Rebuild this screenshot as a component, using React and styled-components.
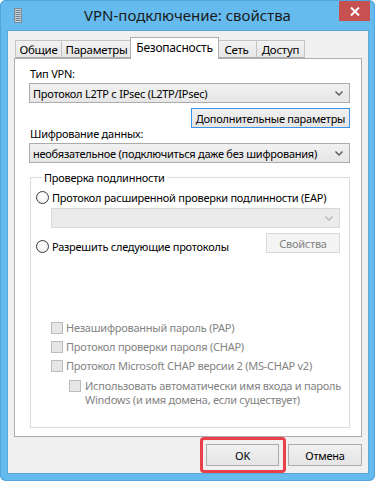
import styled, { createGlobalStyle } from "styled-components";

const Global = createGlobalStyle`
  html, body {
    margin: 0;
    background: #fff;
  }
  body {
    font-family: "Segoe UI", "Noto Sans", sans-serif;
    font-size: 11px;
    letter-spacing: -0.25px;
    color: #000;
  }
  * { box-sizing: border-box; }
`;

export default function App() {
  return (
    <>
      <Global />
      <Window>
        <TitleBar>
          <IconCell>
            <svg width="8" height="15" viewBox="0 0 8 15">
              <rect x="0.5" y="0.5" width="7" height="14" fill="#c9d3dc" stroke="#7d8a96" />
              {[2, 4, 6, 8, 10, 12].map((y) => (
                <rect key={y} x="1.5" y={y} width="5" height="1" fill="#6e7b88" />
              ))}
            </svg>
          </IconCell>
          <Title>VPN-подключение: свойства</Title>
          <CloseCell>
            <CloseButton>
              <svg width="10" height="9" viewBox="0 0 10 9">
                <path d="M1 0.5 L9 8.5 M9 0.5 L1 8.5" stroke="#fff" strokeWidth="2" />
              </svg>
            </CloseButton>
          </CloseCell>
        </TitleBar>

        <Client>
          <TabStrip>
            <Tab $w={47}>Общие</Tab>
            <Tab $w={71}>Параметры</Tab>
            <Tab $w={89} $active>Безопасность</Tab>
            <Tab $w={41}>Сеть</Tab>
            <Tab $w={49}>Доступ</Tab>
          </TabStrip>

          <Panel>
            <Label>Тип VPN:</Label>
            <Select>
              <span>Протокол L2TP с IPsec (L2TP/IPsec)</span>
              <Chevron />
            </Select>
            <RightRow>
              <Button $focused $w={159}>Дополнительные параметры</Button>
            </RightRow>
            <Label $tight>Шифрование данных:</Label>
            <Select>
              <span>необязательное (подключиться даже без шифрования)</span>
              <Chevron />
            </Select>

            <Group>
              <Legend>Проверка подлинности</Legend>
              <RadioRow>
                <Radio />
                <span>Протокол расширенной проверки подлинности (EAP)</span>
              </RadioRow>
              <Select $disabled $indent>
                <span />
                <Chevron $disabled />
              </Select>
              <SplitRow>
                <RadioRow $low>
                  <Radio />
                  <span>Разрешить следующие протоколы</span>
                </RadioRow>
                <Button $disabled $w={74}>Свойства</Button>
              </SplitRow>

              <CheckList>
                <CheckRow>
                  <Check />
                  <span>Незашифрованный пароль (PAP)</span>
                </CheckRow>
                <CheckRow>
                  <Check />
                  <span>Протокол проверки пароля (CHAP)</span>
                </CheckRow>
                <CheckRow>
                  <Check />
                  <span>Протокол Microsoft CHAP версии 2 (MS-CHAP v2)</span>
                </CheckRow>
                <CheckRow $nested>
                  <Check />
                  <span>
                    Использовать автоматически имя входа и пароль
                    <br />
                    Windows (и имя домена, если существует)
                  </span>
                </CheckRow>
              </CheckList>
            </Group>
          </Panel>

          <Footer>
            <Highlight>
              <Button $w={73} $tall>OK</Button>
            </Highlight>
            <Button $w={74} $tall>Отмена</Button>
          </Footer>
        </Client>
      </Window>
    </>
  );
}

function Chevron({ $disabled }) {
  return (
    <svg width="8" height="5" viewBox="0 0 8 5">
      <path
        d="M0.5 0.5 L4 4 L7.5 0.5"
        fill="none"
        stroke={$disabled ? "#b8b8b8" : "#5a5a5a"}
        strokeWidth="1.4"
      />
    </svg>
  );
}

const Window = styled.div`
  width: 375px;
  height: 481px;
  background: #65baee;
  border-radius: 6px;
  box-shadow: inset 0 0 0 1px #4fa6dc;
  display: flex;
  flex-direction: column;
`;

const TitleBar = styled.div`
  height: 31px;
  display: grid;
  grid-template-columns: 1fr auto 1fr;
  align-items: start;
`;

const IconCell = styled.div`
  padding: 8px 0 0 14px;
`;

const Title = styled.div`
  padding-top: 5px;
  font-size: 15px;
  line-height: 20px;
  letter-spacing: 0;
  color: #1a1a1a;
`;

const CloseCell = styled.div`
  display: flex;
  justify-content: flex-end;
  padding: 1px 5px 0 0;
`;

const CloseButton = styled.div`
  width: 31px;
  height: 20px;
  background: #c75050;
  display: flex;
  align-items: center;
  justify-content: center;
`;

const Client = styled.div`
  flex: 1;
  margin: 0 7px 8px 8px;
  background: #f0f0f0;
  box-shadow: 0 0 0 1px #5aa8d8;
  padding: 6px 6px 7px 6px;
  display: flex;
  flex-direction: column;
`;

const TabStrip = styled.div`
  display: flex;
  align-items: flex-end;
  height: 21px;
  padding-left: 1px;
  position: relative;
  z-index: 1;
`;

const Tab = styled.div`
  width: ${(p) => p.$w}px;
  height: ${(p) => (p.$active ? 22 : 18)}px;
  margin: 0 ${(p) => (p.$active ? -2 : 0)}px ${(p) => (p.$active ? -1 : 0)}px
    ${(p) => (p.$active ? -2 : -1)}px;
  border: 1px solid ${(p) => (p.$active ? "#adadad" : "#c4c4c4")};
  border-bottom: ${(p) => (p.$active ? "none" : "1px solid #adadad")};
  background: ${(p) =>
    p.$active ? "#fff" : "linear-gradient(#f2f2f2, #e6e6e6)"};
  position: relative;
  z-index: ${(p) => (p.$active ? 2 : 0)};
  display: flex;
  align-items: center;
  justify-content: center;
  padding-bottom: ${(p) => (p.$active ? 2 : 0)}px;
  font-size: ${(p) => (p.$active ? 12 : 11.5)}px;
  white-space: nowrap;
  &:first-child {
    margin-left: 0;
  }
`;

const Panel = styled.div`
  height: 379px;
  background: #fff;
  border: 1px solid #adadad;
  padding: 7px 11px 8px 14px;
  display: flex;
  flex-direction: column;
`;

const Label = styled.div`
  line-height: 15px;
  margin: ${(p) => (p.$tight ? "-2px" : "0")} 0 2px 1px;
  white-space: nowrap;
`;

const Select = styled.div`
  height: 20px;
  margin-left: ${(p) => (p.$indent ? "15px" : "0")};
  border: 1px solid ${(p) => (p.$disabled ? "#d9d9d9" : "#acacac")};
  background: ${(p) =>
    p.$disabled ? "#ebebeb" : "linear-gradient(#f1f1f1, #e6e6e6)"};
  display: flex;
  align-items: center;
  justify-content: space-between;
  padding: 0 6px 0 3px;
  white-space: nowrap;
`;

const RightRow = styled.div`
  display: flex;
  justify-content: flex-end;
  margin-top: 5px;
`;

const Button = styled.div`
  width: ${(p) => p.$w}px;
  height: ${(p) => (p.$tall ? 22 : 20)}px;
  border: 1px solid
    ${(p) => (p.$focused ? "#3c94e6" : p.$disabled ? "#d9d9d9" : "#acacac")};
  background: ${(p) =>
    p.$disabled ? "#f4f4f4" : "linear-gradient(#f0f0f0, #e5e5e5)"};
  color: ${(p) => (p.$disabled ? "#838383" : "#000")};
  display: flex;
  align-items: center;
  justify-content: center;
  white-space: nowrap;
  flex-shrink: 0;
`;

const Group = styled.fieldset`
  margin: 7px 0 0 1px;
  padding: 5px 9px 0 5px;
  border: 1px solid #dcdcdc;
  flex: 1;
  min-width: 0;
  display: flex;
  flex-direction: column;
`;

const Legend = styled.legend`
  margin-left: 6px;
  padding: 0 2px;
  line-height: 15px;
`;

const RadioRow = styled.div`
  display: flex;
  align-items: center;
  gap: 3px;
  height: 15px;
  margin-top: ${(p) => (p.$low ? "6px" : "0")};
  margin-bottom: 3px;
  white-space: nowrap;
`;

const Radio = styled.span`
  width: 13px;
  height: 13px;
  border-radius: 50%;
  border: 1px solid #3b3b3b;
  background: radial-gradient(circle at 50% 40%, #fff, #ececec);
  flex-shrink: 0;
`;

const SplitRow = styled.div`
  display: flex;
  justify-content: space-between;
  align-items: flex-start;
  margin-top: 5px;
`;

const CheckList = styled.div`
  margin-top: 63px;
  padding-left: 15px;
  display: flex;
  flex-direction: column;
  color: #838383;
`;

const CheckRow = styled.div`
  display: flex;
  align-items: flex-start;
  gap: 3px;
  line-height: ${(p) => (p.$nested ? 14 : 13)}px;
  min-height: 19px;
  padding-top: 1px;
  margin-left: ${(p) => (p.$nested ? "18px" : "0")};
  white-space: nowrap;
  ${(p) => p.$nested && "gap: 4px; margin-top: 1px;"}
`;

const Check = styled.span`
  width: 12px;
  height: 12px;
  margin-top: 1px;
  border: 1px solid #bcbcbc;
  background: #e6e6e6;
  flex-shrink: 0;
`;

const Footer = styled.div`
  display: flex;
  justify-content: flex-end;
  align-items: center;
  gap: 9px;
  margin-top: auto;
`;

const Highlight = styled.div`
  border: 3px solid #e8404a;
  border-radius: 4px;
  padding: 4px 4px 4px 3px;
  margin: -7px -7px -7px -6px;
`;
